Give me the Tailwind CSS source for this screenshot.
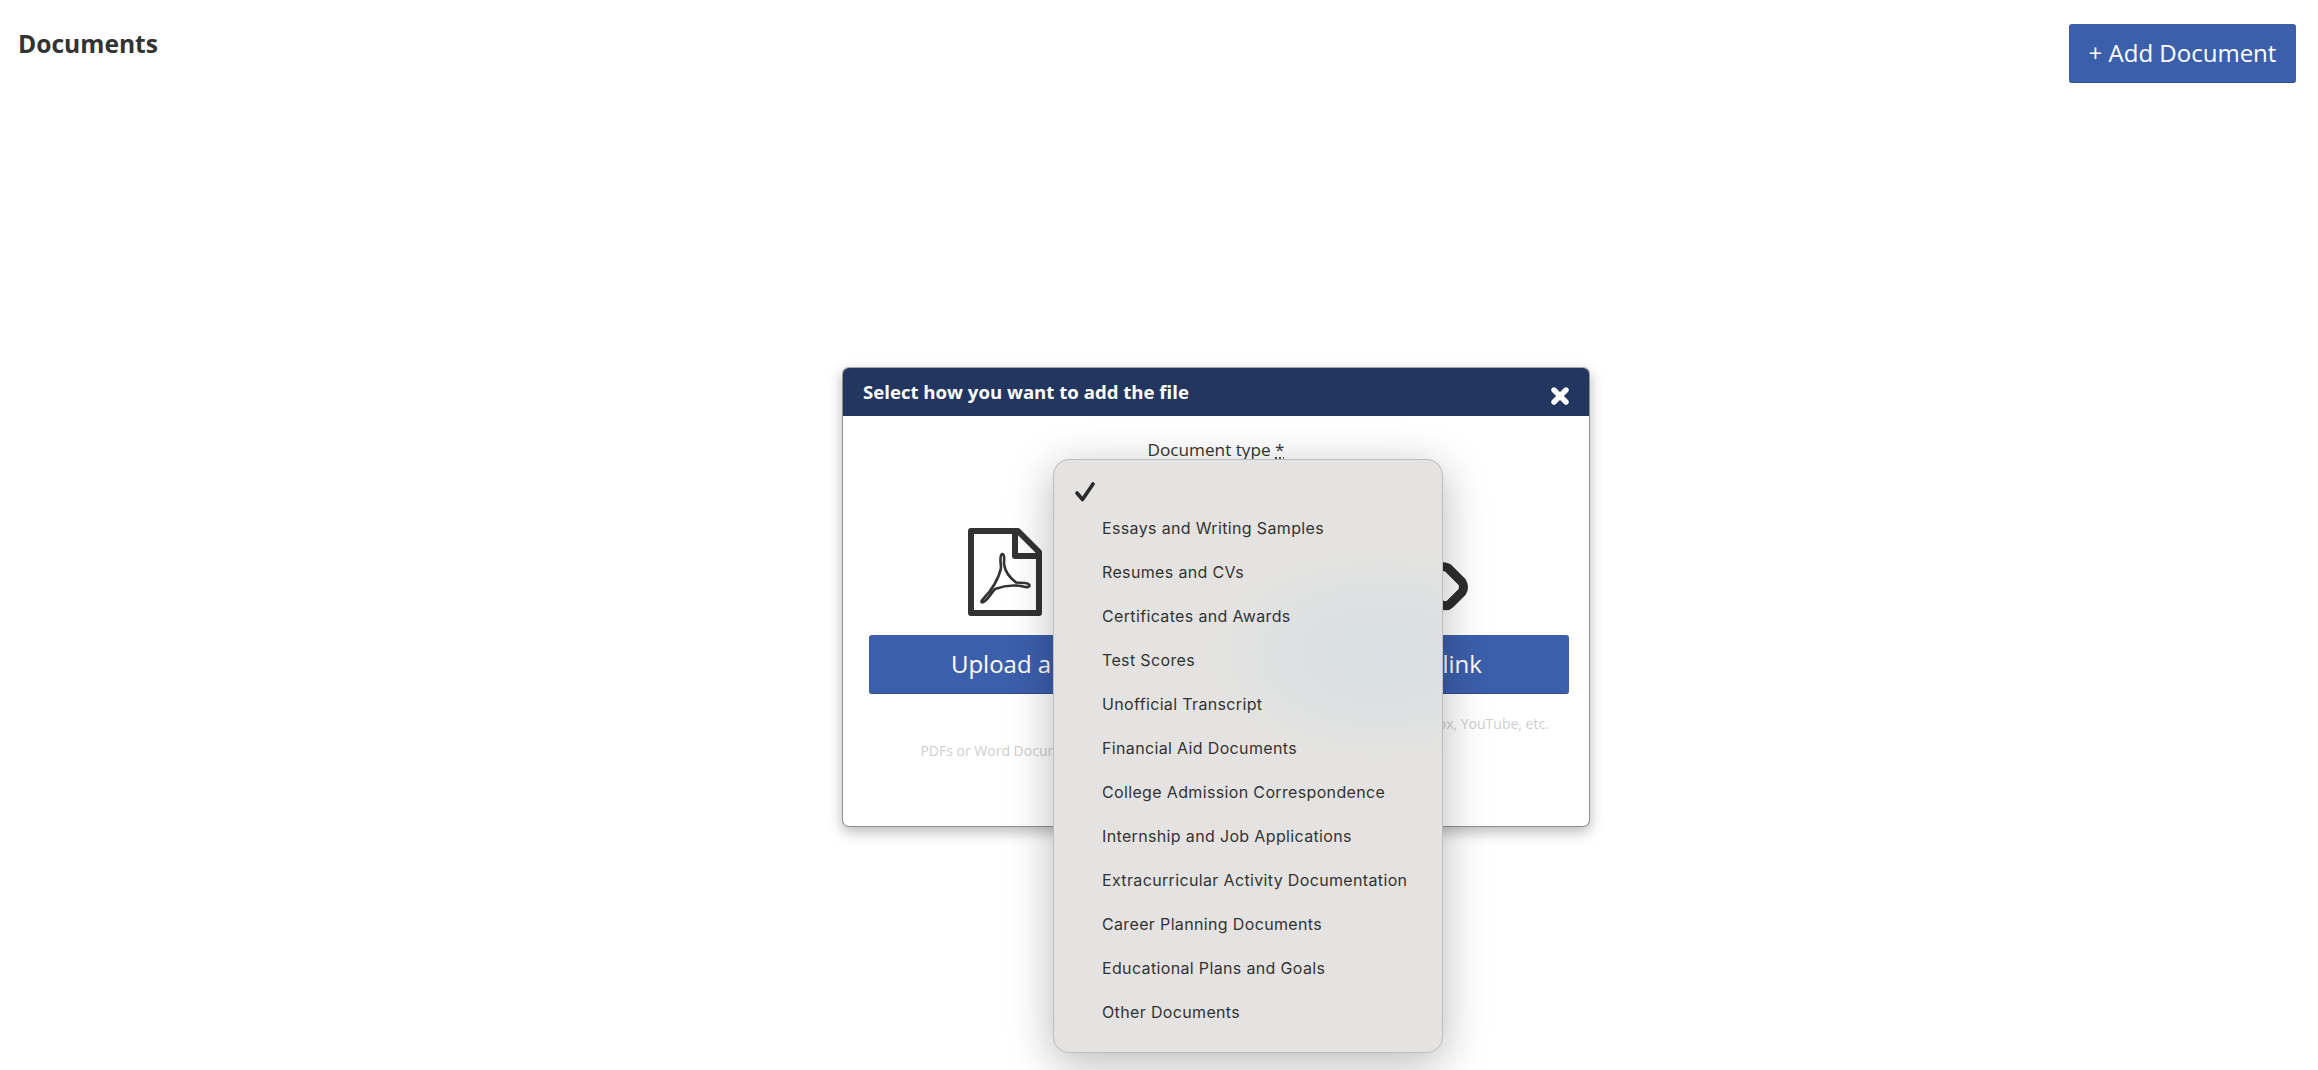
<!DOCTYPE html>
<html>
<head>
<meta charset="utf-8">
<script src="https://cdn.jsdelivr.net/npm/@tailwindcss/browser@4"></script>
</head>
<body class="bg-white font-['Open_Sans',sans-serif] text-[#333]">
<div class="relative w-[2318px] h-[1070px] overflow-hidden">
  <header class="flex justify-between items-start pl-[18px] pr-[22px] pt-[24px]">
    <h1 class="text-[24.6px] leading-[40px] font-bold text-[#333]">Documents</h1>
    <button class="h-[59px] w-[227px] rounded-[3px] bg-[#3c5fac] border-b border-[#2f4d90] text-white text-[24px] leading-none">+ Add Document</button>
  </header>

  <div class="absolute left-[842px] top-[367px] w-[748px] h-[460px] bg-white rounded-[7px] border border-[#8f8f8f] border-t-[#aaa] shadow-[0_5px_14px_rgba(0,0,0,0.28)] overflow-hidden">
    <div class="flex justify-between h-[48px] bg-[#223660] text-white pl-[20px] pr-[20px]">
      <h2 class="text-[18.6px] leading-[47px] font-bold">Select how you want to add the file</h2>
      <svg class="mt-[19px] w-[18px] h-[18px]" viewBox="0 0 18 18"><path d="M3 3L15 15M15 3L3 15" stroke="#fff" stroke-width="5.4" stroke-linecap="round"/></svg>
    </div>
    <div class="pt-[22px] text-center text-[17.2px] leading-[24px] text-[#333]">Document type <abbr class="underline decoration-dotted underline-offset-2">*</abbr></div>
    <div class="flex gap-[112px] pl-[26px] pr-[20px] pt-[66px]">
      <div class="w-[304px] flex flex-col items-center">
        <svg class="w-[74px] h-[88px] mr-[33px]" viewBox="0 0 74 88" fill="none" stroke="#333" stroke-width="6" stroke-linejoin="round">
          <path d="M3 3H50L71 24V85H3Z"/>
          <path d="M47 3V28H71"/>
          <path d="M34 26C31 28 33 36 33 40C31 50 24 62 16 70C12 74 13 76 17 73C22 69 24 64 27 61C35 58 46 57 53 58C59 60 63 59 61 56.5C59 54 52 55 48 54.5C42 50 37 43 36 36C36 32 37 26 34 26Z" stroke-width="2.6"/>
        </svg>
        <button class="mt-[19px] w-full h-[59px] rounded-[3px] bg-[#3c5fac] border-b border-[#2f4d90] text-white text-[24px] leading-none">Upload a file</button>
        <p class="mt-[47px] mr-[33px] text-[14px] leading-[20px] text-[#cfcfcf]">PDFs or Word Documents</p>
      </div>
      <div class="flex-1 flex flex-col items-center relative">
        <svg class="absolute left-[152px] top-[32px] w-[34px] h-[52px]" viewBox="0 0 34 52" fill="none" stroke="#2e2e2e" stroke-width="9" stroke-linejoin="round" stroke-linecap="round"><path d="M5 7C7 6 9 7 11 8L25 22Q28 27 25 32L13 44C11 46 8 46 5 45"/></svg>
        <div class="h-[88px]"></div>
        <button class="mt-[19px] w-full h-[59px] rounded-[3px] bg-[#3c5fac] border-b border-[#2f4d90] text-white text-[24px] leading-none">Add a link</button>
        <p class="mt-[20px] text-[14px] leading-[20px] text-[#cfcfcf] whitespace-nowrap">Google Drive, Dropbox, YouTube, etc.</p>
      </div>
    </div>
  </div>

  <div class="absolute left-[1053px] top-[459px] w-[390px] h-[594px] rounded-[16px] border border-[#bdbdbd] bg-[#e4e3e1] bg-[radial-gradient(ellipse_175px_105px_at_328px_194px,#d9dfe2_0%,#dce0e2_40%,#e4e3e1_100%)] shadow-[0_10px_45px_rgba(0,0,0,0.28)] font-['Inter',sans-serif] text-[16px] tracking-[0.35px] text-[#333]">
    <ul class="pt-[10px]">
      <li class="h-[36px] flex items-center pt-[8px]"><svg class="ml-[21px] w-[20px] h-[20px]" viewBox="0 0 20 20" fill="none" stroke="#2b2b2b" stroke-width="3.6" stroke-linecap="round" stroke-linejoin="round"><path d="M2 11L7.5 17.5L18 2"/></svg></li>
      <li class="h-[44px] pl-[48px] flex items-center">Essays and Writing Samples</li>
      <li class="h-[44px] pl-[48px] flex items-center">Resumes and CVs</li>
      <li class="h-[44px] pl-[48px] flex items-center">Certificates and Awards</li>
      <li class="h-[44px] pl-[48px] flex items-center">Test Scores</li>
      <li class="h-[44px] pl-[48px] flex items-center">Unofficial Transcript</li>
      <li class="h-[44px] pl-[48px] flex items-center">Financial Aid Documents</li>
      <li class="h-[44px] pl-[48px] flex items-center">College Admission Correspondence</li>
      <li class="h-[44px] pl-[48px] flex items-center">Internship and Job Applications</li>
      <li class="h-[44px] pl-[48px] flex items-center">Extracurricular Activity Documentation</li>
      <li class="h-[44px] pl-[48px] flex items-center">Career Planning Documents</li>
      <li class="h-[44px] pl-[48px] flex items-center">Educational Plans and Goals</li>
      <li class="h-[44px] pl-[48px] flex items-center">Other Documents</li>
    </ul>
  </div>
</div>
</body>
</html>
